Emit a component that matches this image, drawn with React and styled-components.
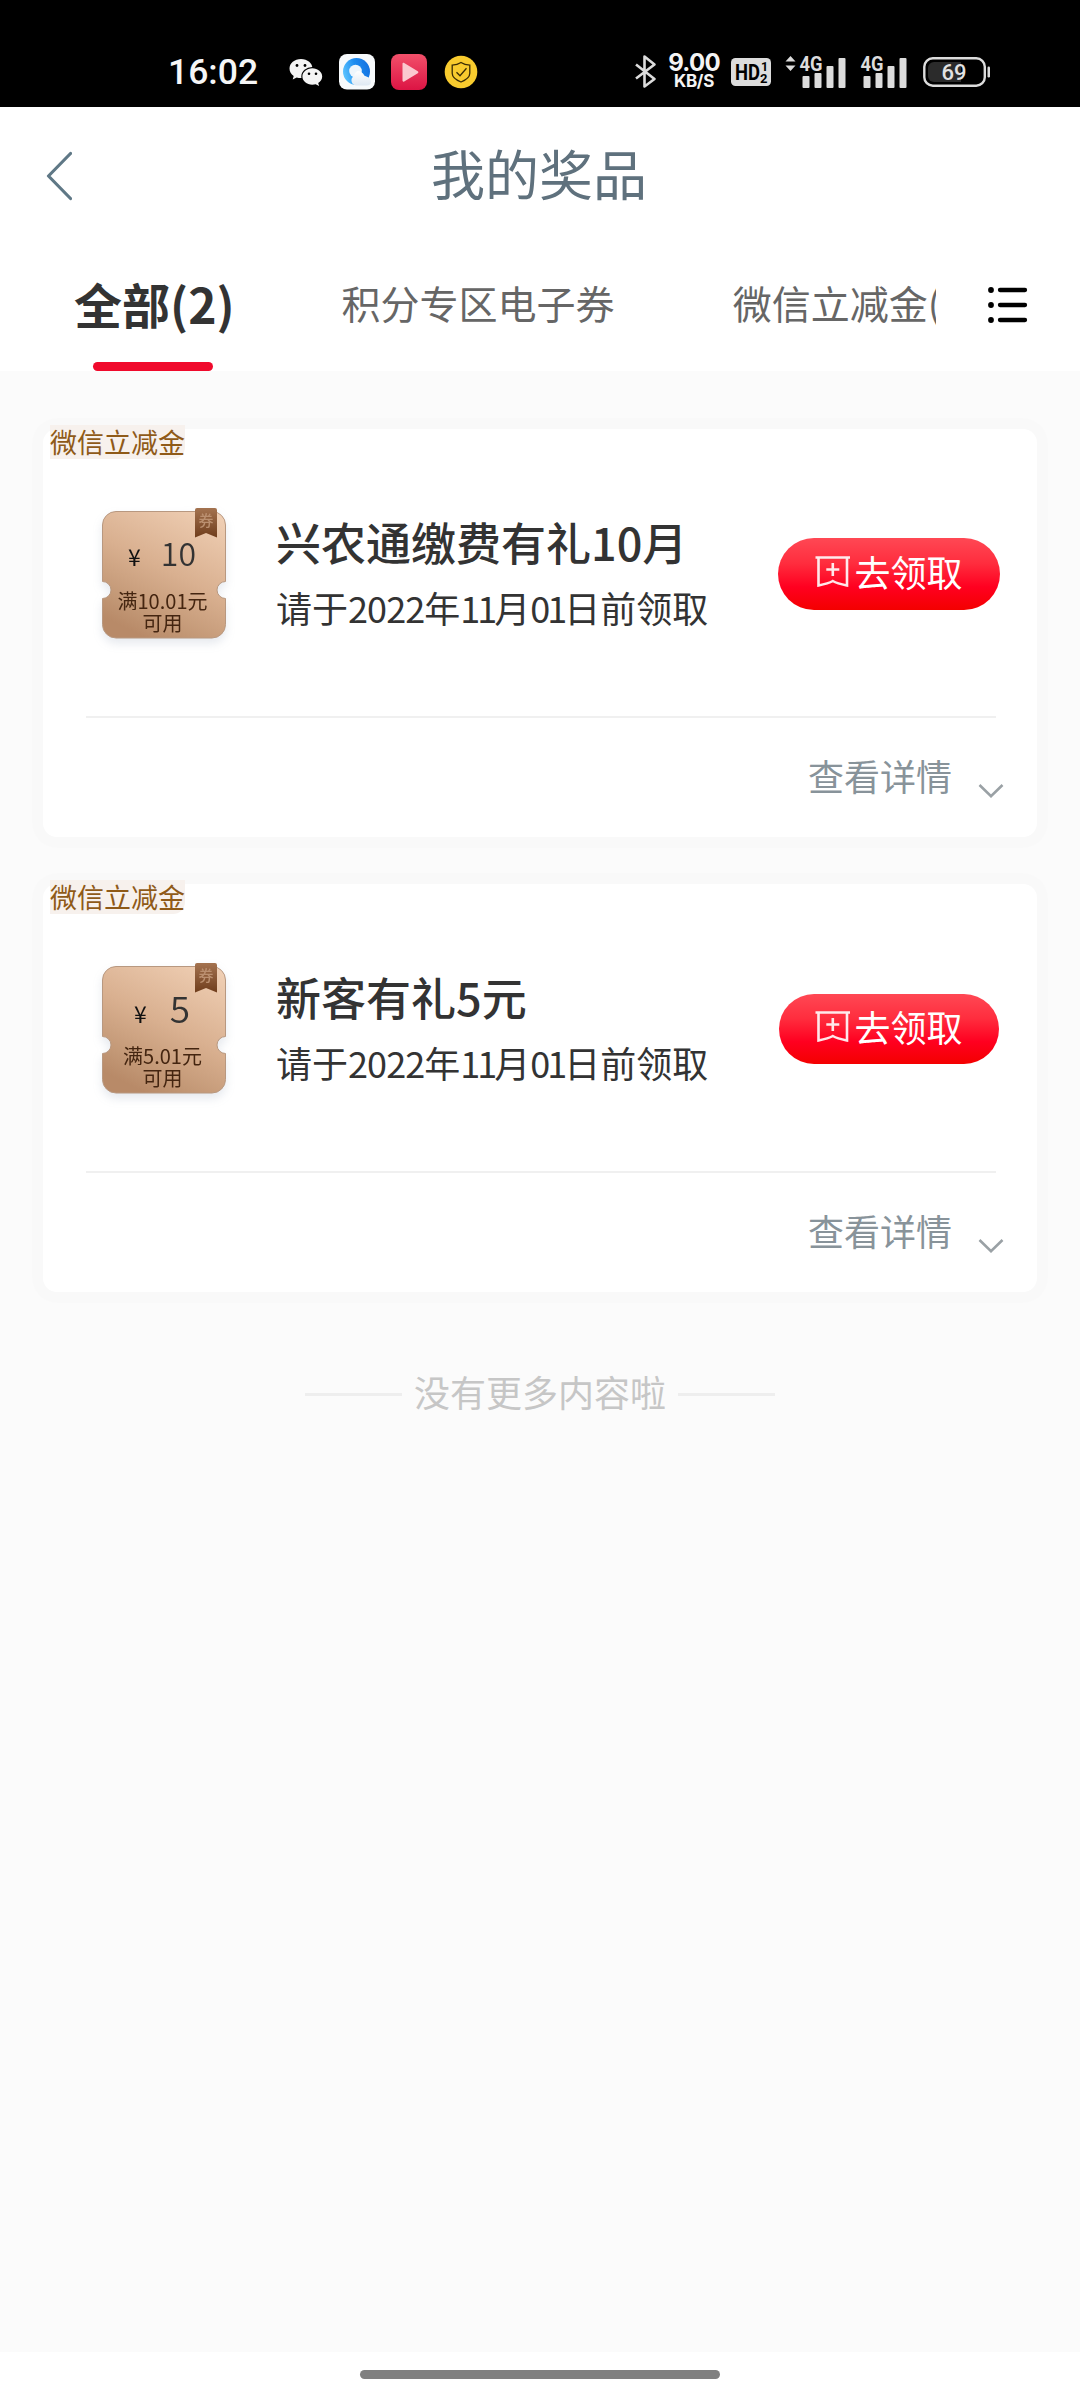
import React from "react"
import styled, { createGlobalStyle } from "styled-components"

const prizes = [
    {
        id: 1,
        tag: '微信立减金',
        amount: '10',
        amountSize: 32,
        amountGap: 20,
        limit: '满10.01元',
        title: '兴农通缴费有礼10月',
        buttonWidth: 222,
        buttonHeight: 72,
    },
    {
        id: 2,
        tag: '微信立减金',
        amount: '5',
        amountSize: 37,
        amountGap: 23,
        limit: '满5.01元',
        title: '新客有礼5元',
        buttonWidth: 220,
        buttonHeight: 70,
    },
]

const WechatIcon = () => (
    <svg width="34" height="36" viewBox="0 0 34 36">
        <path d="M12 5C5.400 5 .5 9.300 .5 14.600c0 3.100 1.600 5.700 4.200 7.500L3.700 25.500l4-2c1.300.4 2.800.6 4.300.6 6.500 0 11.500-4.200 11.500-9.500S18.500 5 12 5z" fill="#f4f4f4" />
        <ellipse cx="23.300" cy="22.500" rx="11" ry="9.500" fill="#000" />
        <path d="M23.300 14.200c-5.500 0-9.900 3.700-9.900 8.300s4.400 8.200 9.900 8.200c1.200 0 2.300-.2 3.400-.5l3.400 1.700-.9-2.900c2.400-1.500 4-3.900 4-6.500 0-4.600-4.400-8.300-9.900-8.300z" fill="#f4f4f4" />
        <circle cx="8" cy="11.500" r="1.400" />
        <circle cx="16" cy="11.500" r="1.400" />
        <circle cx="20" cy="19.800" r="1.300" />
        <circle cx="27" cy="19.800" r="1.300" />
    </svg>
)

const BrowserIcon = () => (
    <svg width="36" height="36" viewBox="0 0 36 36">
        <defs>
            <linearGradient id="ring" x1="0" y1="0.6" x2="1" y2="0.3">
                <stop offset="0" stopColor="#5cc4ff" />
                <stop offset="0.5" stopColor="#1e8df0" />
                <stop offset="1" stopColor="#1370e0" />
            </linearGradient>
            <linearGradient id="cloud" x1="0" y1="0" x2="0" y2="1">
                <stop offset="0" stopColor="#fff" />
                <stop offset="1" stopColor="#dfe9f3" />
            </linearGradient>
        </defs>
        <rect width="36" height="35.500" rx="8" fill="#f7fafc" />
        <circle cx="17.500" cy="17.500" r="13.500" fill="url(#ring)" />
        <circle cx="16.500" cy="17" r="6.300" fill="#eef6fc" />
        <path d="M17 31.500a5 5 0 0 1-2.500-9 8 8 0 0 1 4-5.500c3 0 5.500 2 7 4.800 3.500 1 6.500 3 6.500 6 0 2.500-1.500 3.700-4 3.700z" fill="url(#cloud)" />
    </svg>
)

const PlayIcon = () => (
    <svg width="36" height="36" viewBox="0 0 36 36">
        <defs>
            <linearGradient id="play" x1="0" y1="0" x2="0" y2="1">
                <stop offset="0" stopColor="#f2506a" />
                <stop offset="1" stopColor="#dc1444" />
            </linearGradient>
        </defs>
        <rect width="36" height="36" rx="8" fill="url(#play)" />
        <path d="M11.500 9.800v16.800c0 1 .9 1.400 1.700.9l13.600-8.300c.8-.5.8-1.400 0-1.900L13.200 9c-.8-.5-1.700-.1-1.700.8z" fill="#fbc9cf" />
    </svg>
)

const ShieldIcon = () => (
    <svg width="36" height="36" viewBox="0 0 36 36" fill="none" stroke="#3a2c05" strokeWidth="1.300">
        <circle cx="18" cy="18" r="16.300" fill="#f8cb2e" stroke="none" />
        <path d="M18 8.500c3 2 5.500 2.500 8.800 2.700v8c0 4.500-4.500 7-8.800 8.800-4.300-1.800-8.800-4.300-8.800-8.800v-8c3.300-.2 5.800-.7 8.800-2.700z" />
        <path d="M13.500 18.200l3.500 3.600 6.500-7.500" />
    </svg>
)

const BluetoothIcon = () => (
    <svg width="22" height="36" viewBox="0 0 22 36" fill="none" stroke="#dcdcdc" strokeWidth="2.600" strokeLinejoin="round">
        <path d="M1 10.500l18.500 14.500L9.500 32.500V2.500l10 8L1 24.500" />
    </svg>
)

const HdIcon = () => (
    <svg width="40" height="28" viewBox="0 0 40 28" fontFamily="Roboto, sans-serif" fontWeight="700">
        <rect width="40" height="28" rx="4.500" fill="#dcdcdc" />
        <text x="4" y="22" fontSize="22.500" textLength="25" lengthAdjust="spacingAndGlyphs">HD</text>
        <text x="30" y="13" fontSize="12.500">1</text>
        <text x="29" y="24.500" fontSize="13">2</text>
    </svg>
)

const SignalIcon = ({ arrows }) => (
    <svg width={arrows ? 61 : 47} height="40" viewBox={arrows ? '-14 -3 61 40' : '0 -3 47 40'} fill="#dcdcdc">
        {arrows && <path d="M-8.500 1l5 5.500h-10zM-8.500 16l5-5.500h-10z" />}
        <text x="0.500" y="16.300" fontSize="19.500" fontWeight="700" fontFamily="Roboto, sans-serif" textLength="23" lengthAdjust="spacingAndGlyphs">4G</text>
        <rect x="3.500" y="21" width="7" height="12" rx="1" />
        <rect x="15.500" y="18" width="7" height="15" rx="1" />
        <rect x="27.500" y="11" width="7" height="22" rx="1" />
        <rect x="39.500" y="3" width="7" height="30" rx="1" />
    </svg>
)

const BatteryIcon = () => (
    <svg width="68" height="30" viewBox="0 0 68 30">
        <rect x="1.300" y="1.300" width="60.500" height="27.400" rx="8.500" fill="none" stroke="#dcdcdc" strokeWidth="2.400" />
        <path d="M11 5h27v20H11a6 6 0 0 1-6-6v-8a6 6 0 0 1 6-6z" fill="#2b2b2b" />
        <rect x="64.500" y="9.500" width="2.500" height="11" rx="1.200" fill="#dcdcdc" />
        <text x="31" y="22.500" textAnchor="middle" fontSize="22" fontWeight="500" fontFamily="Roboto, sans-serif" fill="#e2e2e2">69</text>
    </svg>
)

const BackIcon = () => (
    <svg width="28" height="50" viewBox="0 0 28 50" fill="none" stroke="#5f7886" strokeWidth="3.200" strokeLinecap="round" strokeLinejoin="round">
        <path d="M26.500 2.500L4.500 25l22 22.500" />
    </svg>
)

const ListIcon = () => (
    <svg width="40" height="38" viewBox="0 0 40 38" stroke="#000" strokeWidth="4.300" strokeLinecap="round">
        {[4, 19, 34].map((y) => (
            <g key={y}>
                <circle cx="3" cy={y} r="2.900" stroke="none" />
                <path d={`M12 ${y}H37`} />
            </g>
        ))}
    </svg>
)

const ReceiveIcon = () => (
    <svg width="36" height="34" viewBox="0 0 36 34" fill="none" stroke="#fff" strokeOpacity="0.9" strokeWidth="2.600">
        <path d="M0.500 3.500h34.500M3.500 3.500v28c5-1 10-2 14.300-4.500 4.300 2.500 9.300 3.500 14.200 4.500v-28M17.800 9v13M11.300 15.500h13" />
    </svg>
)

const ChevronIcon = () => (
    <svg width="26" height="16" viewBox="0 0 26 16" fill="none" stroke="#9aa1a5" strokeWidth="2.600">
        <path d="M1.500 2L13 13.200 24.500 2" />
    </svg>
)

const VoucherShape = ({ id }) => (
    <Shape width="144" height="154" viewBox="-10 -10 144 154">
        <defs>
            <linearGradient id={`paper${id}`} x1="0.850" y1="0" x2="0.350" y2="1">
                <stop offset="0" stopColor="#efceb3" />
                <stop offset="0.500" stopColor="#d9b090" />
                <stop offset="0.850" stopColor="#c29775" />
                <stop offset="1" stopColor="#b88a68" />
            </linearGradient>
            <linearGradient id={`ribbon${id}`} x1="0" y1="0" x2="0" y2="1">
                <stop offset="0" stopColor="#a47350" />
                <stop offset="1" stopColor="#6f3d1c" />
            </linearGradient>
        </defs>
        <path
            d="M14 3.500h96a13.500 13.500 0 0 1 13.500 13.500v56.500a6.500 6.500 0 0 0 0 17v26a13.500 13.500 0 0 1-13.500 13.500h-96a13.500 13.500 0 0 1-13.500-13.500v-26a6.500 6.500 0 0 0 0-17v-56.500a13.500 13.500 0 0 1 13.500-13.500z"
            fill={`url(#paper${id})`}
            stroke="#b89880"
            strokeWidth="1"
        />
        <path d="M93 2a2 2 0 0 1 2-2h18a2 2 0 0 1 2 2v27.500l-11-4.500-11 4.500z" fill={`url(#ribbon${id})`} />
        <text x="104" y="18" textAnchor="middle" fontSize="15" fontWeight="500" fontFamily='"Noto Sans CJK SC", sans-serif' fill="#bb9070">券</text>
    </Shape>
)

const PrizeCard = ({ prize }) => {
    return (
        <Card>
            <Tag>{prize.tag}</Tag>
            <CardMain>
                <Voucher>
                    <VoucherShape id={prize.id} />
                    <Price>
                        <Yen>¥</Yen>
                        <Amount $size={prize.amountSize} $gap={prize.amountGap}>{prize.amount}</Amount>
                    </Price>
                    <Limit>{prize.limit}<br />可用</Limit>
                </Voucher>
                <Info>
                    <PrizeTitle>{prize.title}</PrizeTitle>
                    <Deadline>请于<Digits>2022</Digits>年<Digits $tight>11</Digits>月<Digits $tight>01</Digits>日前领取</Deadline>
                </Info>
                <ButtonSlot>
                    <ReceiveButton $width={prize.buttonWidth} $height={prize.buttonHeight}>
                        <ReceiveIcon />
                        去领取
                    </ReceiveButton>
                </ButtonSlot>
            </CardMain>
            <CardFooter>
                <DetailText>查看详情</DetailText>
                <ChevronIcon />
            </CardFooter>
        </Card>
    )
}

const App = () => {
    return (
        <>
            <GlobalStyle />
            <Page>
                <StatusBar>
                    <Time>16:02</Time>
                    <AppIcons>
                        <WechatIcon />
                        <BrowserIcon />
                        <PlayIcon />
                        <ShieldIcon />
                    </AppIcons>
                    <SystemIcons>
                        <BluetoothIcon />
                        <Speed>
                            <SpeedValue>9.00</SpeedValue>
                            <SpeedUnit>KB/S</SpeedUnit>
                        </Speed>
                        <HdIcon />
                        <SignalIcon arrows />
                        <SignalIcon />
                        <BatteryIcon />
                    </SystemIcons>
                </StatusBar>
                <Header>
                    <BackButton><BackIcon /></BackButton>
                    <HeaderTitle>我的奖品</HeaderTitle>
                </Header>
                <TabBar>
                    <Tabs>
                        <Tab $active>全部(2)</Tab>
                        <Tab>积分专区电子券</Tab>
                        <Tab>微信立减金(2)</Tab>
                    </Tabs>
                    <MenuButton><ListIcon /></MenuButton>
                </TabBar>
                <Content>
                    {prizes.map((prize) => <PrizeCard key={prize.id} prize={prize} />)}
                    <NoMore>没有更多内容啦</NoMore>
                </Content>
                <HomeArea><HomeBar /></HomeArea>
            </Page>
        </>
    )
}

const GlobalStyle = createGlobalStyle`
            * {
            box-sizing: border-box;
            }

            body {
            margin: 0;
            font-family: "Noto Sans CJK SC", sans-serif;
            background: #fbfbfb;
            }

            svg {
            display: block;
            flex-shrink: 0;
            }

            button {
            font-family: inherit;
            border: none;
            background: none;
            padding: 0;
            }`

const Page = styled.div`
            width: 1080px;
            height: 2400px;
            display: flex;
            flex-direction: column;
            overflow: hidden;
            background: #fbfbfb;`

const StatusBar = styled.div`
            height: 107px;
            flex-shrink: 0;
            display: flex;
            align-items: center;
            padding: 36px 89px 0 168px;
            background: #000;`

const Time = styled.div`
            width: 121px;
            font-family: Roboto, sans-serif;
            font-size: 35.500px;
            font-weight: 500;
            line-height: 42px;
            color: #f6f6f6;`

const AppIcons = styled.div`
            display: flex;
            align-items: center;
            gap: 16px;`

const SystemIcons = styled.div`
            margin-left: auto;
            display: flex;
            align-items: center;
            gap: 14px;

            svg:last-child {
            margin-left: 2px;
            }`

const Speed = styled.div`
            width: 48px;
            margin: 0 -1px;
            display: flex;
            flex-direction: column;
            align-items: center;
            font-family: Inter, sans-serif;
            font-weight: 700;
            color: #f4f4f4;`

const SpeedValue = styled.div`
            font-size: 24px;
            line-height: 19px;
            letter-spacing: -0.7px;`

const SpeedUnit = styled.div`
            font-size: 17px;
            line-height: 18px;
            letter-spacing: -0.3px;`

const Header = styled.div`
            height: 138px;
            flex-shrink: 0;
            display: grid;
            grid-template-columns: 99px 1fr 101px;
            align-items: center;
            background: #fff;`

const BackButton = styled.button`
            padding-left: 44px;`

const HeaderTitle = styled.div`
            text-align: center;
            font-size: 54px;
            line-height: 60px;
            padding-bottom: 7px;
            color: #5f717d;`

const TabBar = styled.div`
            height: 126px;
            flex-shrink: 0;
            display: flex;
            align-items: stretch;
            background: #fff;`

const Tabs = styled.div`
            width: 936px;
            padding-left: 74px;
            display: flex;
            gap: 118px;
            overflow: hidden;`

const Tab = styled.div`
            flex-shrink: 0;
            position: relative;
            padding-top: ${({ $active }) => ($active ? '29px' : '28px')};
            white-space: nowrap;
            font-size: ${({ $active }) => ($active ? '48px' : '39px')};
            font-weight: ${({ $active }) => ($active ? 700 : 400)};
            line-height: 58px;
            margin-right: ${({ $active }) => ($active ? '-11px' : '0')};
            color: ${({ $active }) => ($active ? '#333' : '#666')};

            &::after {
            content: '';
            display: ${({ $active }) => ($active ? 'block' : 'none')};
            position: absolute;
            left: 19px;
            bottom: 0;
            width: 120px;
            height: 9px;
            border-radius: 5px;
            background: #f00a2c;
        }`

const MenuButton = styled.button`
            padding: 0 0 7px 52px;`

const Content = styled.div`
            flex: 1;
            padding: 58px 43px 0;
            display: flex;
            flex-direction: column;
            gap: 47px;`

const Card = styled.div`
            height: 408px;
            display: flex;
            flex-direction: column;
            align-items: stretch;
            background: #fff;
            border-radius: 14px;
            box-shadow: 0 0 0 11px rgba(0, 0, 0, 0.006);`

const Tag = styled.div`
            align-self: flex-start;
            margin: -4px 0 0 7px;
            height: 34px;
            font-size: 27px;
            line-height: 34px;
            color: #8f5a18;
            background: #f7f1ed;
            border-radius: 0 0 12px 0;`

const CardMain = styled.div`
            height: 257px;
            padding: 0 37px 28px 59px;
            display: flex;
            align-items: center;`

const Voucher = styled.div`
            position: relative;
            width: 124px;
            height: 131px;
            flex-shrink: 0;
            display: flex;
            flex-direction: column;
            align-items: center;
            filter: drop-shadow(0 5px 5px rgba(90, 110, 140, 0.15));`

const Shape = styled.svg`
            position: absolute;
            left: -10px;
            top: -10px;`

const Price = styled.div`
            position: relative;
            height: 82px;
            padding: 20px 4px 0 0;
            display: flex;
            align-items: baseline;
            line-height: 48px;`

const Yen = styled.span`
            font-size: 23px;
            color: #111;`

const Amount = styled.span`
            margin-left: ${({ $gap }) => $gap}px;
            font-size: ${({ $size }) => $size}px;
            font-weight: 350;
            color: #333;`

const Limit = styled.div`
            position: relative;
            padding-right: 3px;
            text-align: center;
            font-size: 20px;
            line-height: 22px;
            color: #442510;`

const Info = styled.div`
            flex: 1;
            margin-left: 50px;`

const PrizeTitle = styled.div`
            font-size: 45px;
            font-weight: 500;
            line-height: 66px;
            color: #333;
            white-space: nowrap;`

const Deadline = styled.div`
            font-size: 36px;
            line-height: 64px;
            color: #333;
            white-space: nowrap;`

const Digits = styled.span`
            letter-spacing: ${({ $tight }) => ($tight ? '-3px' : '-0.9px')};`

const ButtonSlot = styled.div`
            width: 222px;
            display: flex;
            justify-content: center;`

const ReceiveButton = styled.button`
            width: ${({ $width }) => $width}px;
            height: ${({ $height }) => $height}px;
            padding-bottom: 6px;
            display: flex;
            align-items: center;
            justify-content: center;
            gap: 3px;
            font-size: 36px;
            line-height: 50px;
            white-space: nowrap;
            color: #fff;
            border-radius: 36px;
            background: linear-gradient(180deg, #ff4854 0%, #ff2d3e 35%, #ff0020 68%, #f40000 100%);`

const CardFooter = styled.div`
            flex: 1;
            margin: 0 41px 0 43px;
            border-top: 2px solid #f0f0f0;
            display: flex;
            justify-content: flex-end;
            align-items: center;

            svg {
            margin: 27px -8px 0 26px;
        }`

const DetailText = styled.div`
            font-size: 36px;
            line-height: 50px;
            padding-bottom: 6px;
            color: #88939a;`

const NoMore = styled.div`
            margin-top: 30px;
            display: flex;
            align-items: center;
            justify-content: center;
            gap: 12px;
            font-size: 36px;
            line-height: 44px;
            color: #c6c6c6;

            &::before,
            &::after {
            content: '';
            width: 97px;
            height: 3px;
            margin-top: 6px;
            background: #eeeeee;
        }`

const HomeArea = styled.div`
            height: 48px;
            flex-shrink: 0;
            padding-top: 18px;
            display: flex;
            justify-content: center;
            background: #fff;`

const HomeBar = styled.div`
            width: 360px;
            height: 9px;
            border-radius: 5px;
            background: #808080;`

export default App
